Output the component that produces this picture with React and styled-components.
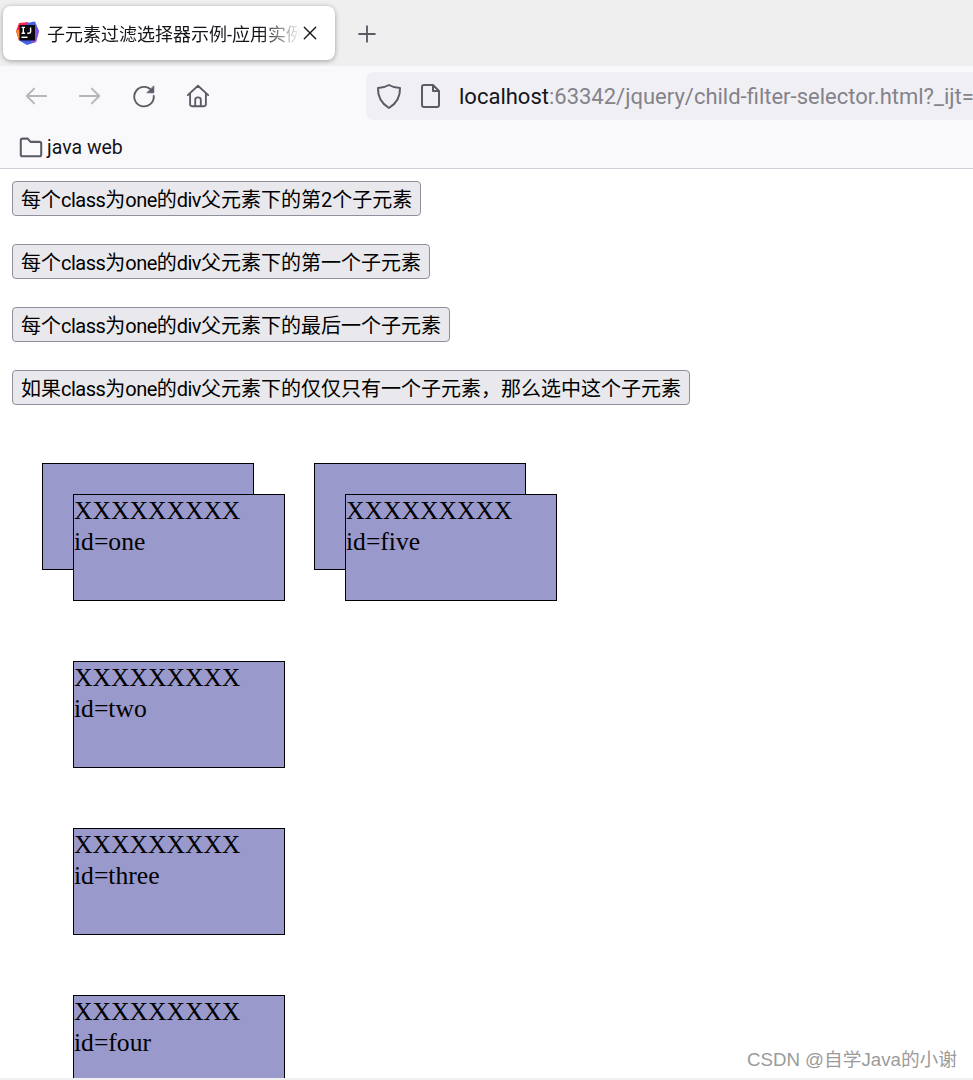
import React from "react";
import styled, { createGlobalStyle } from "styled-components";

const GlobalStyle = createGlobalStyle`
  html, body {
    margin: 0;
    padding: 0;
    background: #fff;
  }
`;

const uiFont = `Roboto, "Noto Sans CJK SC", sans-serif`;

const Page = styled.div`
  position: relative;
  width: 973px;
  height: 1080px;
  display: flex;
  flex-direction: column;
  overflow: hidden;
  font-family: ${uiFont};
`;

const TabBar = styled.div`
  height: 66px;
  flex: none;
  display: flex;
  align-items: flex-start;
  padding: 6px 0 0 3px;
  box-sizing: border-box;
  background: #efeff0;
`;

const Tab = styled.div`
  width: 332px;
  height: 54px;
  box-sizing: border-box;
  display: flex;
  align-items: center;
  padding: 0 14px 0 12px;
  background: #fff;
  border-radius: 8px;
  box-shadow: 0 1px 5px rgba(0, 0, 0, 0.35);
`;

const TabTitle = styled.span`
  width: 254px;
  margin-left: 8px;
  overflow: hidden;
  white-space: nowrap;
  font-size: 18px;
  color: #15141a;
  -webkit-mask-image: linear-gradient(to right, #000 84%, transparent 100%);
  mask-image: linear-gradient(to right, #000 84%, transparent 100%);
`;

const CloseButton = styled.span`
  display: flex;
  margin-left: 1px;
`;

const NewTab = styled.span`
  display: flex;
  margin: 18px 0 0 22px;
`;

const Toolbar = styled.div`
  height: 61px;
  flex: none;
  display: flex;
  align-items: flex-start;
  padding-top: 6px;
  box-sizing: border-box;
  background: #f9f9fb;
`;

const NavIcons = styled.div`
  width: 366px;
  height: 48px;
  flex: none;
  display: flex;
  align-items: center;
  padding-left: 23px;
  gap: 28px;
  box-sizing: border-box;
`;

const NavIcon = styled.span`
  display: flex;
  width: 26px;
  justify-content: center;
`;

const UrlBar = styled.div`
  flex: 1;
  min-width: 0;
  height: 48px;
  display: flex;
  align-items: center;
  padding-left: 9px;
  gap: 13px;
  background: #f0f0f4;
  border-radius: 8px 0 0 8px;
  overflow: hidden;

  svg {
    flex: none;
  }
`;

const UrlText = styled.div`
  flex: none;
  margin-left: 2px;
  white-space: nowrap;
  font-size: 22px;
  color: #15141a;

  span {
    color: #84828a;
  }
`;

const BookmarkBar = styled.div`
  height: 42px;
  flex: none;
  display: flex;
  align-items: center;
  gap: 3px;
  padding: 0 0 1px 18px;
  box-sizing: border-box;
  background: #f9f9fb;
  border-bottom: 1px solid #cfcfd8;
  font-size: 19.5px;
  color: #15141a;
`;

const Content = styled.main`
  flex: 1;
  min-height: 0;
  padding: 12px 12px 0;
  overflow: hidden;
`;

const Actions = styled.div`
  display: flex;
  flex-direction: column;
  align-items: flex-start;
  gap: 28px;
`;

const ActionButton = styled.button`
  height: 35px;
  padding: 4px 8px 0;
  box-sizing: border-box;
  background: #e9e9ed;
  border: 1px solid #8f8f9d;
  border-radius: 4px;
  font-family: ${uiFont};
  font-size: 20px;
  line-height: 27px;
  color: #000;
  white-space: nowrap;
`;

const Latin = styled.span`
  letter-spacing: -0.52px;
`;

const Boxes = styled.div`
  display: flex;
  margin-top: 28px;
`;

const ParentBox = styled.div`
  width: 212px;
  height: 107px;
  margin: 30px;
  box-sizing: border-box;
  flex: none;
  background: #9999cc;
  border: 1px solid #000;
`;

const ChildBox = styled.div`
  width: 212px;
  height: 107px;
  margin: 30px 30px 60px;
  box-sizing: border-box;
  background: #9999cc;
  border: 1px solid #000;
  font-family: "Liberation Serif", serif;
  font-size: 25.6px;
  line-height: 31px;
  color: #000;
`;

const BottomStrip = styled.div`
  position: relative;
  height: 2px;
  flex: none;
  background: #f0f0f0;
`;

const Watermark = styled.div`
  position: absolute;
  right: 16px;
  bottom: 8px;
  font-family: "Liberation Sans", "Noto Sans CJK SC", sans-serif;
  font-size: 18.7px;
  line-height: 24px;
  color: #9b9b9b;
  white-space: nowrap;
`;

const Stroke = ({ size = 28, color = "#5b5b66", width = 2, children }) => (
  <svg width={size} height={size} viewBox="0 0 28 28" fill="none" stroke={color} strokeWidth={width} strokeLinecap="round" strokeLinejoin="round">
    {children}
  </svg>
);

const IdeaLogo = () => (
  <svg width="24" height="24" viewBox="0 0 24 24">
    <path d="M1 10 L4 2 L13 1 L12 12 L4 20 Z" fill="#fe2857" />
    <path d="M1 9 L6 9 L6 17 L3 17 Z" fill="#ff8a1e" />
    <path d="M12 2 L20 0.5 L24 10 L21 21 L12 24 L5 20 Z" fill="#4a5fe8" />
    <path d="M18 2 L24 10 L21 21 L16 22 Z" fill="#8a4fe0" />
    <rect x="4.5" y="4" width="15.5" height="15.5" fill="#0b0b0f" />
    <rect x="6.5" y="15.6" width="6" height="1.4" fill="#fff" />
    <path d="M6.6 6.4 H10 M8.3 6.4 V12.2 M6.6 12.2 H10 M15.6 6.4 V10.8 Q15.6 12.2 14 12.2 H12.3" fill="none" stroke="#fff" strokeWidth="1.4" />
  </svg>
);

const buttons = [
  "每个class为one的div父元素下的第2个子元素",
  "每个class为one的div父元素下的第一个子元素",
  "每个class为one的div父元素下的最后一个子元素",
  "如果class为one的div父元素下的仅仅只有一个子元素，那么选中这个子元素",
];

const boxGroups = [
  ["one", "two", "three", "four"],
  ["five"],
];

// latin runs are set a bit tighter than the chinese around them
const ButtonLabel = ({ text }) =>
  text.split(/([a-z]+)/).map((part, i) => (i % 2 ? <Latin key={i}>{part}</Latin> : part));

export default function App() {
  return (
    <Page>
      <GlobalStyle />
      <TabBar>
        <Tab>
          <IdeaLogo />
          <TabTitle>子元素过滤选择器示例-应用实例</TabTitle>
          <CloseButton>
            <Stroke size={16} color="#15141a" width={2.4}>
              <path d="M4 4 L24 24 M24 4 L4 24" />
            </Stroke>
          </CloseButton>
        </Tab>
        <NewTab>
          <Stroke size={20} width={2.6}>
            <path d="M14 3 V25 M3 14 H25" />
          </Stroke>
        </NewTab>
      </TabBar>
      <Toolbar>
        <NavIcons>
          <NavIcon>
            <Stroke color="#b5b5ba">
              <path d="M25 14 H4 M12 6 L4 14 L12 22" />
            </Stroke>
          </NavIcon>
          <NavIcon>
            <Stroke color="#b5b5ba">
              <path d="M3 14 H24 M16 6 L24 14 L16 22" />
            </Stroke>
          </NavIcon>
          <NavIcon>
            <Stroke>
              <path d="M22.5 8.5 A10.5 10.5 0 1 0 24.5 14" />
              <path d="M24.5 3.5 V10.5 H17.5 Z" fill="#5b5b66" strokeWidth="1" />
            </Stroke>
          </NavIcon>
          <NavIcon>
            <Stroke>
              <path d="M3 13 L14 3 L25 13 M5.5 11 V23 Q5.5 25 7.5 25 H20.5 Q22.5 25 22.5 23 V11 M11 25 V18 Q11 15.5 14 15.5 Q17 15.5 17 18 V25" />
            </Stroke>
          </NavIcon>
        </NavIcons>
        <UrlBar>
          <Stroke>
            <path d="M14 3 Q19 6 25 6 Q25.500 19 14 26 Q2.500 19 3 6 Q9 6 14 3 Z" />
          </Stroke>
          <Stroke>
            <path d="M6 5 Q6 3 8 3 H17 L23 9 V23 Q23 25 21 25 H8 Q6 25 6 23 Z M17 3 V9 H23" />
          </Stroke>
          <UrlText>
            localhost<span>:63342/jquery/child-filter-selector.html?_ijt=</span>
          </UrlText>
        </UrlBar>
      </Toolbar>
      <BookmarkBar>
        <Stroke size={26} width={2.2}>
          <path d="M3 22 V7 Q3 5 5 5 H10.500 L13.500 8.500 H23 Q25 8.500 25 10.500 V22 Q25 24 23 24 H5 Q3 24 3 22 Z" />
        </Stroke>
        java web
      </BookmarkBar>
      <Content>
        <Actions>
          {buttons.map((label) => (
            <ActionButton key={label}>
              <ButtonLabel text={label} />
            </ActionButton>
          ))}
        </Actions>
        <Boxes>
          {boxGroups.map((group) => (
            <ParentBox key={group[0]}>
              {group.map((id) => (
                <ChildBox key={id}>
                  XXXXXXXXX
                  <br />
                  id={id}
                </ChildBox>
              ))}
            </ParentBox>
          ))}
        </Boxes>
      </Content>
      <BottomStrip />
      <Watermark>CSDN @自学Java的小谢</Watermark>
    </Page>
  );
}
